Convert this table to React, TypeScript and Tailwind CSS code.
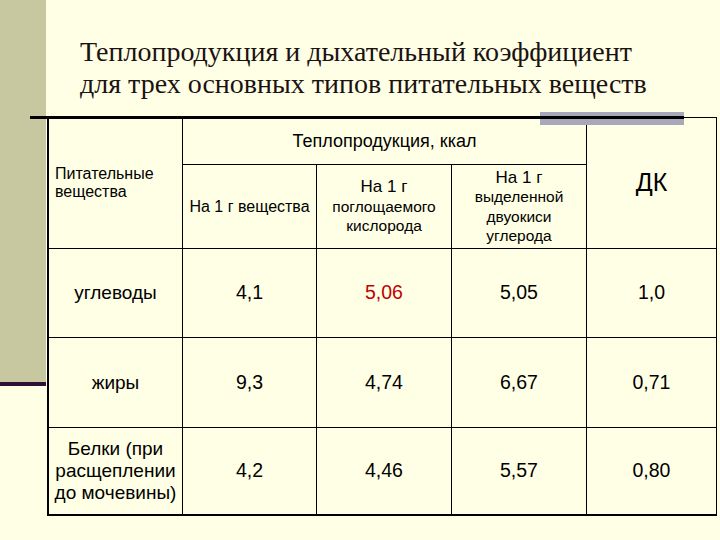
import React from "react"

const serif = { fontFamily: '"Liberation Serif", "Times New Roman", serif' }

function Cell({ className = "", children }: { className?: string; children?: React.ReactNode }) {
  return <div className={`flex items-center justify-center text-center border-black ${className}`}>{children}</div>
}

const rows = [
  { name: "углеводы", v: ["4,1", "5,06", "5,05", "1,0"] },
  { name: "жиры", v: ["9,3", "4,74", "6,67", "0,71"] },
  { name: "Белки (при\nрасщеплении\nдо мочевины)", v: ["4,2", "4,46", "5,57", "0,80"] },
]

export default function App() {
  return (
    <div
      className="relative w-[720px] h-[540px] overflow-hidden bg-[#FFFFE5] flex text-black"
      style={{ fontFamily: '"Liberation Sans", Arial, sans-serif' }}
    >
      {/* left slide stripe */}
      <div className="w-[46px] flex flex-col">
        <div className="h-[382px] bg-[#C8C8A0]" />
        <div className="h-[4px] bg-[#2E0F36]" />
      </div>

      <div className="flex-1 flex flex-col">
        <div className="pl-[34px] pt-[36px] text-[28px] leading-[32px] text-[#1b1212]" style={serif}>
          <div>Теплопродукция и дыхательный коэффициент</div>
          <div>для трех основных типов питательных веществ</div>
        </div>

        <div className="mt-[17px] ml-[1px] w-[670px] grid grid-cols-[134px_134px_135px_135px_129px] grid-rows-[47px_84px_89px_90px_86px] border-t border-l-2 border-r border-b-2 border-black">
          <Cell className="col-start-1 row-start-1 row-span-2 border-r border-b !justify-start !text-left pl-[6px] text-[16px] leading-[18px]">
            <div>
              Питательные
              <br />
              вещества
            </div>
          </Cell>
          <Cell className="col-start-2 col-span-3 row-start-1 border-r border-b text-[18px]">Теплопродукция, ккал</Cell>
          <Cell className="col-start-5 row-start-1 row-span-2 border-b text-[25px]">ДК</Cell>
          <Cell className="col-start-2 row-start-2 border-r border-b text-[16px]">На 1 г вещества</Cell>
          <Cell className="col-start-3 row-start-2 border-r border-b text-[15.5px] leading-[19.5px]">
            <div>
              <span className="text-[17px]">На 1 г</span>
              <br />
              поглощаемого
              <br />
              кислорода
            </div>
          </Cell>
          <Cell className="col-start-4 row-start-2 border-r border-b text-[15.5px] leading-[19.5px]">
            <div>
              <span className="text-[17px]">На 1 г</span>
              <br />
              выделенной
              <br />
              двуокиси
              <br />
              углерода
            </div>
          </Cell>

          {rows.map((r, i) => {
            const last = i === rows.length - 1
            const b = last ? "" : "border-b"
            return (
              <React.Fragment key={r.name}>
                <Cell className={`border-r ${b} text-[19px] leading-[22px] whitespace-pre-line`}>{r.name}</Cell>
                {r.v.map((v, j) => (
                  <Cell
                    key={j}
                    className={`${j < 3 ? "border-r" : ""} ${b} text-[19.5px] ${i === 0 && j === 1 ? "text-[#C00000]" : ""}`}
                  >
                    {v}
                  </Cell>
                ))}
              </React.Fragment>
            )
          })}
        </div>
      </div>

      {/* decorative rule over the table top */}
      <div className="absolute left-[540px] top-[112px] w-[144px] h-[13px] bg-[#A8A8BA]" />
      <div className="absolute left-[30px] top-[116px] w-[654px] h-[3px] bg-black" />
    </div>
  )
}
